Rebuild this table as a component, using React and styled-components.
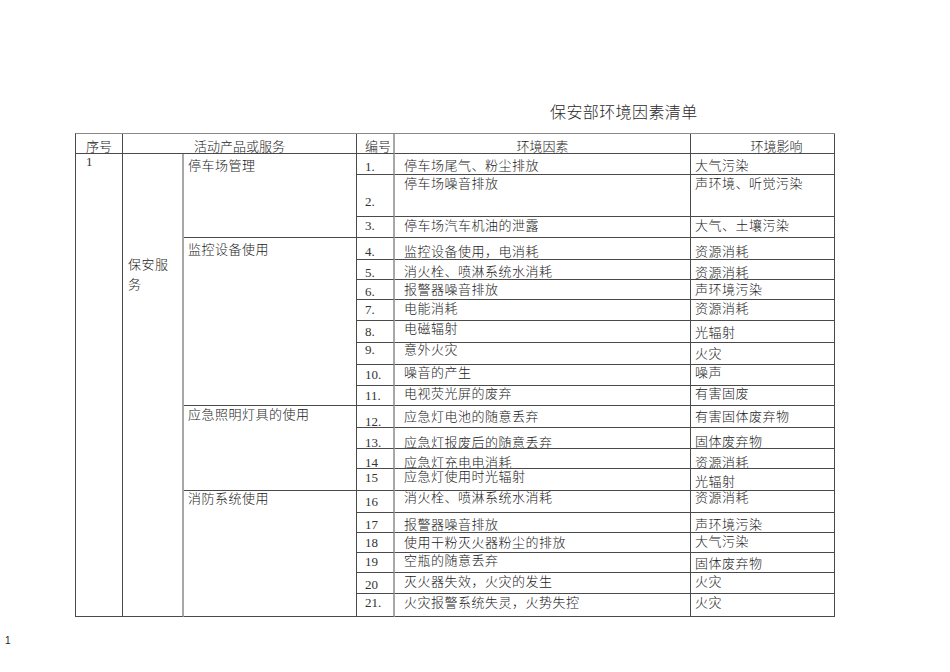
import React from "react";
import styled, { createGlobalStyle } from "styled-components";

const GlobalStyle = createGlobalStyle`
  html, body { margin: 0; padding: 0; background: #ffffff; }
  body { font-family: "Liberation Serif", "Noto Sans CJK SC", serif; color: #111; }
`;

const LINE = "#4a4a4a";
const SOFT = "#a8a8a8";

const Page = styled.div`
  width: 950px;
  height: 672px;
  overflow: hidden;
  box-sizing: border-box;
`;

const Sheet = styled.section`
  padding: 103px 0 0 75px;
`;

const Title = styled.h1`
  margin: 0 0 0 475px;
  font-family: "Liberation Serif", "Noto Sans CJK SC", serif;
  font-weight: 300;
  font-size: 16px;
  line-height: 20px;
  letter-spacing: 0.4px;
  color: #2a2a2a;
`;

const Grid = styled.div`
  margin-top: 10px;
  display: grid;
  width: 760px;
  box-sizing: border-box;
  grid-template-columns: 47px 61px 173px 38px 296px 144px;
  grid-template-rows: ${(p) => p.$rows};
  border-top: 1px solid #8a8a8a;
  border-left: 1px solid ${LINE};
  font-size: 13px;
  line-height: 14px;
  letter-spacing: 0.5px;
  font-family: "Liberation Serif", "Noto Sans CJK SC", serif;
  font-weight: 300;
  color: #1a1a1a;
`;

const Cell = styled.div`
  box-sizing: border-box;
  border-right: 1px solid ${LINE};
  border-bottom: 1px solid ${LINE};
  white-space: nowrap;
  overflow: hidden;
  padding-top: ${(p) => p.$pt || 0}px;
`;

const HeaderCell = styled(Cell)`
  grid-column: span ${(p) => p.$cols || 1};
  letter-spacing: 0;
  text-align: ${(p) => p.$align || "center"};
  padding-left: ${(p) => p.$pl || 0}px;
  padding-top: 6px;
  border-right-color: ${(p) => (p.$soft ? SOFT : LINE)};
  border-right-width: ${(p) => (p.$soft ? 2 : 1)}px;
`;

const SerialCell = styled(Cell)`
  grid-row: span ${(p) => p.$span};
  padding-left: 10px;
  padding-top: 1px;
  color: #333;
`;

const ServiceCell = styled(Cell)`
  grid-row: span ${(p) => p.$span};
  padding: 101px 0 0 5px;
  white-space: normal;
  line-height: 20px;
  width: 61px;
  border-right: 2px solid ${SOFT};
  & > span {
    display: block;
    width: 44px;
  }
`;

const GroupCell = styled(Cell)`
  grid-row: span ${(p) => p.$span};
  padding-left: 4px;
`;

const NumCell = styled(Cell)`
  padding-left: 8px;
  letter-spacing: 0;
  color: #333;
  border-right: 2px solid ${SOFT};
`;

const FactorCell = styled(Cell)`
  padding-left: 9px;
`;

const ImpactCell = styled(Cell)`
  padding-left: 4px;
`;

const PageNumber = styled.div`
  margin: 18px 0 0 5px;
  font-family: "Liberation Sans", Arial, sans-serif;
  font-size: 10px;
  line-height: 12px;
  color: #222;
`;

const groups = [
  {
    label: "停车场管理",
    pt: 5,
    rows: [
      { n: "1.", f: "停车场尾气、粉尘排放", i: "大气污染", h: 21, p: [6, 5, 5] },
      { n: "2.", f: "停车场噪音排放", i: "声环境、听觉污染", h: 42, p: [20, 2, 2] },
      { n: "3.", f: "停车场汽车机油的泄露", i: "大气、土壤污染", h: 21, p: [2, 2, 2] },
    ],
  },
  {
    label: "监控设备使用",
    pt: 5,
    rows: [
      { n: "4.", f: "监控设备使用，电消耗", i: "资源消耗", h: 22, p: [7, 7, 7] },
      { n: "5.", f: "消火栓、喷淋系统水消耗", i: "资源消耗", h: 20, p: [6, 5, 6] },
      { n: "6.", f: "报警器噪音排放", i: "声环境污染", h: 20, p: [5, 3, 3] },
      { n: "7.", f: "电能消耗", i: "资源消耗", h: 21, p: [3, 2, 2] },
      { n: "8.", f: "电磁辐射", i: "光辐射", h: 22, p: [4, 1, 5] },
      { n: "9.", f: "意外火灾", i: "火灾", h: 22, p: [0, 0, 4] },
      { n: "10.", f: "噪音的产生", i: "噪声", h: 21, p: [3, 1, 1] },
      { n: "11.", f: "电视荧光屏的废弃", i: "有害固废", h: 20, p: [3, 1, 1] },
    ],
  },
  {
    label: "应急照明灯具的使用",
    pt: 2,
    rows: [
      { n: "12.", f: "应急灯电池的随意丢弃", i: "有害固体废弃物", h: 22, p: [9, 4, 4] },
      { n: "13.", f: "应急灯报废后的随意丢弃", i: "固体废弃物", h: 21, p: [8, 8, 7] },
      { n: "14", f: "应急灯充电电消耗", i: "资源消耗", h: 20, p: [7, 7, 7] },
      { n: "15", f: "应急灯使用时光辐射", i: "光辐射", h: 22, p: [2, 1, 6] },
    ],
  },
  {
    label: "消防系统使用",
    pt: 1,
    rows: [
      { n: "16", f: "消火栓、喷淋系统水消耗", i: "资源消耗", h: 22, p: [4, 0, 0] },
      { n: "17", f: "报警器噪音排放", i: "声环境污染", h: 20, p: [5, 5, 5] },
      { n: "18", f: "使用干粉灭火器粉尘的排放", i: "大气污染", h: 20, p: [3, 3, 2] },
      { n: "19", f: "空瓶的随意丢弃", i: "固体废弃物", h: 20, p: [2, 1, 4] },
      { n: "20", f: "灭火器失效，火灾的发生", i: "火灾", h: 21, p: [5, 2, 2] },
      { n: "21.", f: "火灾报警系统失灵，火势失控", i: "火灾", h: 23, p: [2, 2, 2] },
    ],
  },
];

export default function App() {
  const allRows = groups.flatMap((g) => g.rows);
  const template = ["20px", ...allRows.map((r) => `${r.h}px`)].join(" ");
  const total = allRows.length;

  return (
    <Page>
      <GlobalStyle />
      <Sheet>
        <Title>保安部环境因素清单</Title>
        <Grid $rows={template}>
          <HeaderCell>序号</HeaderCell>
          <HeaderCell $cols={2}>活动产品或服务</HeaderCell>
          <HeaderCell $align="left" $pl={8} $soft>编号</HeaderCell>
          <HeaderCell>环境因素</HeaderCell>
          <HeaderCell $pl={28}>环境影响</HeaderCell>

          <SerialCell $span={total}>1</SerialCell>
          <ServiceCell $span={total}>
            <span>保安服务</span>
          </ServiceCell>

          {groups.map((g) => (
            <React.Fragment key={g.label}>
              <GroupCell $span={g.rows.length} $pt={g.pt}>
                {g.label}
              </GroupCell>
              {g.rows.map((r) => (
                <React.Fragment key={r.n}>
                  <NumCell $pt={r.p[0]}>{r.n}</NumCell>
                  <FactorCell $pt={r.p[1]}>{r.f}</FactorCell>
                  <ImpactCell $pt={r.p[2]}>{r.i}</ImpactCell>
                </React.Fragment>
              ))}
            </React.Fragment>
          ))}
        </Grid>
      </Sheet>
      <PageNumber>1</PageNumber>
    </Page>
  );
}
